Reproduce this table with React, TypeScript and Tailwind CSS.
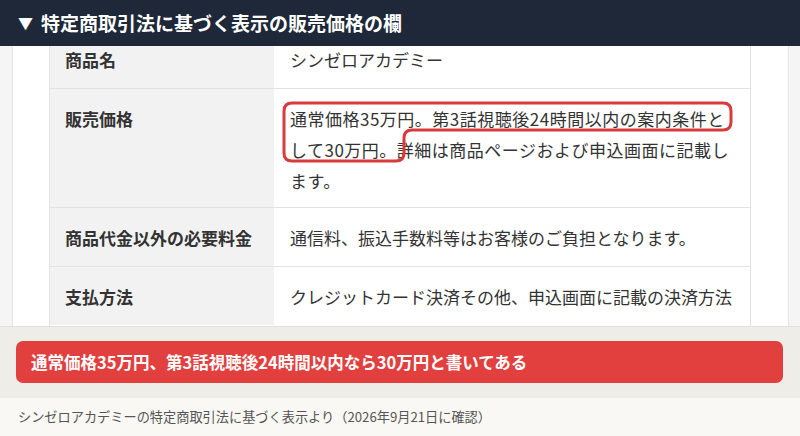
const font = { fontFamily: '"Noto Sans CJK JP", "Noto Sans", sans-serif' };

function Row({ label, children, first, extra }: { label: string; children: React.ReactNode; first?: boolean; extra?: string }) {
  return (
    <div className={`flex ${first ? "" : "border-t border-[#e2e2e2]"}`}>
      <div className="w-[224px] shrink-0 bg-[#f2f2f2] px-[15px] pt-[14px] pb-[13px] text-[17px] leading-[31px] font-bold text-[#333]">
        {label}
      </div>
      <div className={`relative flex-1 bg-white px-[16px] pt-[14px] text-[17px] leading-[31px] text-[#333] ${extra ?? "pb-[13px]"}`}>
        {children}
      </div>
    </div>
  );
}

export default function App() {
  return (
    <div className="w-[800px] h-[436px] overflow-hidden bg-white" style={font}>
      {/* header */}
      <div className="h-[46px] bg-[#1e2839] flex items-center px-[18px] text-white font-bold text-[19px]">
        <span className="text-[15px] mr-[8px]">▼</span>
        <span>特定商取引法に基づく表示の販売価格の欄</span>
      </div>

      {/* screenshot of the table */}
      <div className="h-[280px] overflow-hidden flex">
        <div className="w-[13px] shrink-0 bg-[#f5f5f5] border-r border-[#e4e4e4]" />
        <div className="w-[36px] shrink-0 bg-white" />
        <div className="w-[702px] shrink-0 border-x border-[#e2e2e2] mt-[-16px]">
          <Row label="商品名" first>
            シンゼロアカデミー
          </Row>
          <Row label="販売価格" extra="pb-[11px] tracking-[0.5px]">
            <svg className="absolute left-0 top-0 pointer-events-none" width="477" height="119" viewBox="0 0 477 119">
              <path
                d="M 18 14 H 449 Q 457 14 457 22 V 33 Q 457 41 449 41 H 138 Q 130 41 130 49 V 64 Q 130 72 122 72 H 18 Q 10 72 10 64 V 22 Q 10 14 18 14 Z"
                fill="none"
                stroke="#d93a3a"
                strokeWidth="3"
                strokeLinejoin="round"
              />
            </svg>
            通常価格35万円。第3話視聴後24時間以内の案内条件と
            <br />
            して30万円。詳細は商品ページおよび申込画面に記載し
            <br />
            ます。
          </Row>
          <Row label="商品代金以外の必要料金">通信料、振込手数料等はお客様のご負担となります。</Row>
          <Row label="支払方法">クレジットカード決済その他、申込画面に記載の決済方法</Row>
        </div>
        <div className="flex-1 bg-white border-r border-[#e4e4e4]" />
        <div className="w-[11px] shrink-0 bg-[#f5f5f5]" />
      </div>

      {/* callout */}
      <div className="h-[72px] bg-[#efede7] border-t border-[#e3e0d8] pt-[14px] pl-[16px] pr-[17px]">
        <div className="h-[42px] rounded-[7px] bg-[#e23f3f] flex items-center px-[15px] text-white font-bold text-[16.5px]">
          通常価格35万円、第3話視聴後24時間以内なら30万円と書いてある
        </div>
      </div>

      {/* caption */}
      <div className="h-[38px] bg-[#f9f8f4] flex items-center px-[18px] text-[13.2px] text-[#555]">
        シンゼロアカデミーの特定商取引法に基づく表示より（2026年9月21日に確認）
      </div>
    </div>
  );
}
